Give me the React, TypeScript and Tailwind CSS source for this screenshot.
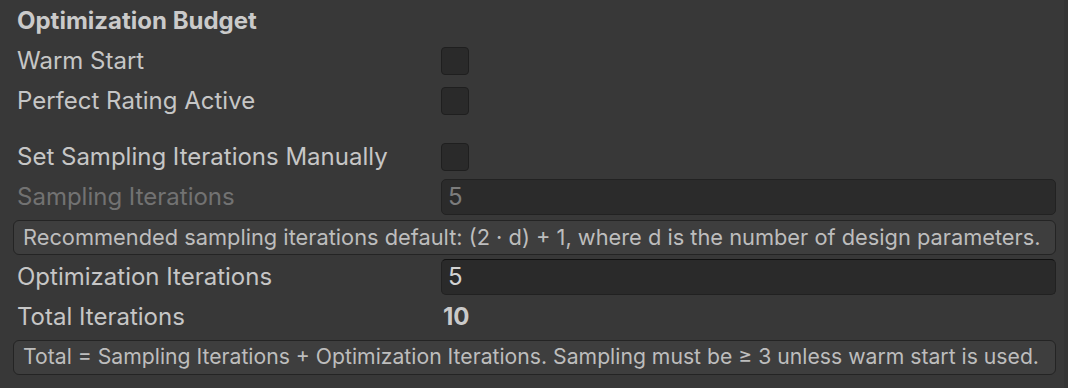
import React from 'react';

function Checkbox() {
  return <div className="w-[28px] h-[28px] rounded-[4px] bg-[#2a2a2a] border border-[#1f1f1f]" />;
}

function Row({ label, disabled, children }: { label: string; disabled?: boolean; children?: React.ReactNode }) {
  return (
    <div className="h-10 flex items-center">
      <div className={`w-[428px] pl-[4px] shrink-0 ${disabled ? 'text-[#727272]' : 'text-[#c6c6c6]'}`}>{label}</div>
      <div className="flex-1 flex items-center">{children}</div>
    </div>
  );
}

function HelpBox({ text, size }: { text: string; size: string }) {
  return (
    <div className="h-10 flex items-center">
      <div
        className={`w-full h-[35px] rounded-[6px] bg-[#3e3e3e] border border-[#242424] flex items-center px-[9px] text-[#bdbdbd] whitespace-nowrap ${size}`}
      >
        {text}
      </div>
    </div>
  );
}

export default function App() {
  return (
    <div
      className="w-[1068px] h-[388px] bg-[#383838] flex overflow-hidden text-[24px]"
      style={{ fontFamily: 'Inter, "Noto Sans", sans-serif' }}
    >
      <div className="flex-1 pl-[13px] pr-[8px] pt-px">
        <div className="h-10 flex items-center pl-[4px] font-bold text-[#cacaca]">Optimization Budget</div>
        <Row label="Warm Start">
          <Checkbox />
        </Row>
        <Row label="Perfect Rating Active">
          <Checkbox />
        </Row>
        <div className="h-4" />
        <Row label="Set Sampling Iterations Manually">
          <Checkbox />
        </Row>
        <Row label="Sampling Iterations" disabled>
          <div className="w-full h-[36px] rounded-[5px] bg-[#2b2b2b] border border-[#222222] flex items-center px-[6px] text-[#7c7c7c]">
            5
          </div>
        </Row>
        <HelpBox
          size="text-[21.8px]"
          text="Recommended sampling iterations default: (2 · d) + 1, where d is the number of design parameters."
        />
        <Row label="Optimization Iterations">
          <div className="w-full h-[36px] rounded-[5px] bg-[#2a2a2a] border border-[#212121] border-t-[#111111] flex items-center px-[6px] text-[#d2d2d2]">
            5
          </div>
        </Row>
        <Row label="Total Iterations">
          <span className="pl-[2px] font-bold text-[#cacaca]">10</span>
        </Row>
        <HelpBox
          size="text-[21.2px]"
          text="Total = Sampling Iterations + Optimization Iterations. Sampling must be ≥ 3 unless warm start is used."
        />
      </div>
      <div className="w-[4px] bg-[#343434]" />
    </div>
  );
}
